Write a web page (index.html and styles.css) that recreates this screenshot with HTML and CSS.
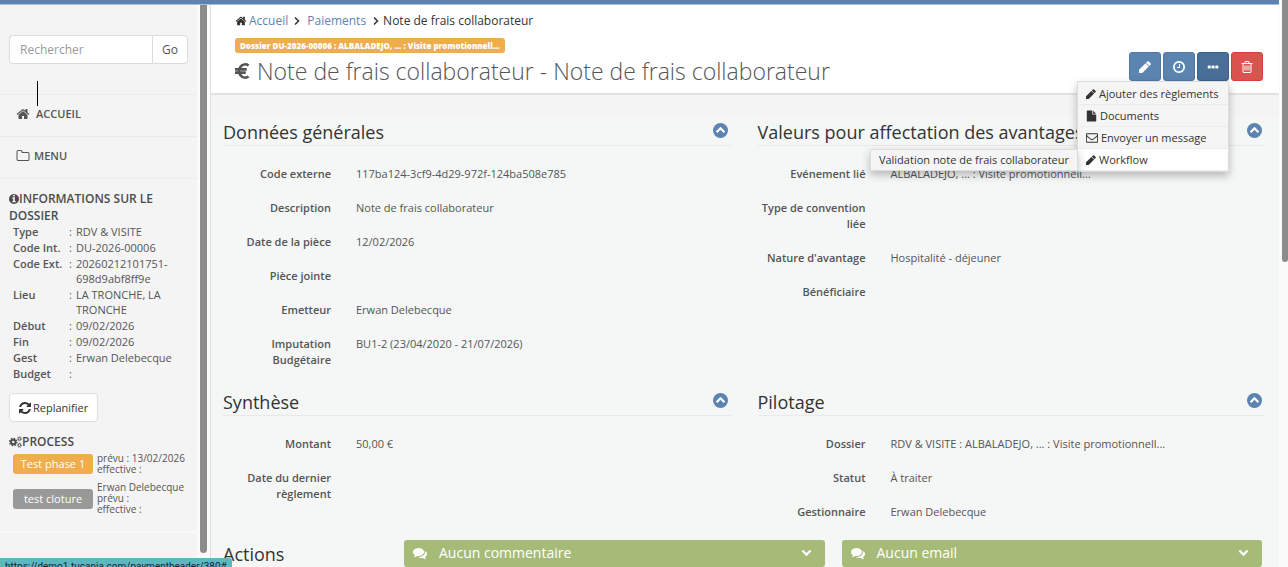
FILE: index.html
```html
<!DOCTYPE html>
<html lang="fr">
<head>
<meta charset="utf-8">
<title>Note de frais collaborateur</title>
<link rel="stylesheet" href="styles.css">
</head>
<body>
<svg class="sprite" aria-hidden="true">
  <symbol id="home" viewBox="0 0 1792 1792"><path d="M1472 992v480q0 26-19 45t-45 19h-384v-384h-256v384h-384q-26 0-45-19t-19-45v-480q0-1 .5-3t.5-3l575-474 575 474q1 2 1 6zm223-69l-62 74q-8 9-21 11h-3q-13 0-21-7l-692-577-692 577q-12 8-24 7-13-2-21-11l-62-74q-8-10-7-23.5t11-21.5l719-599q32-26 76-26t76 26l244 204v-195q0-14 9-23t23-9h192q14 0 23 9t9 23v408l219 182q10 8 11 21.5t-7 23.5z"/></symbol>
  <symbol id="folder" viewBox="0 0 1792 1792"><path d="M1600 1312v-704q0-40-28-68t-68-28h-704q-40 0-68-28t-28-68v-64q0-40-28-68t-68-28h-320q-40 0-68 28t-28 68v960q0 40 28 68t68 28h1216q40 0 68-28t28-68zm128-704v704q0 92-66 158t-158 66h-1216q-92 0-158-66t-66-158v-960q0-92 66-158t158-66h320q92 0 158 66t66 158v32h672q92 0 158 66t66 158z"/></symbol>
  <symbol id="info" viewBox="128 128 1536 1536"><path d="M1152 1376v-160q0-14-9-23t-23-9h-96v-512q0-14-9-23t-23-9h-320q-14 0-23 9t-9 23v160q0 14 9 23t23 9h96v320h-96q-14 0-23 9t-9 23v160q0 14 9 23t23 9h448q14 0 23-9t9-23zm-128-896v-160q0-14-9-23t-23-9h-192q-14 0-23 9t-9 23v160q0 14 9 23t23 9h192q14 0 23-9t9-23zm640 416q0 209-103 385.5t-279.5 279.5-385.5 103-385.5-103-279.5-279.5-103-385.5 103-385.5 279.5-279.5 385.5-103 385.5 103 279.5 279.5 103 385.5z"/></symbol>
  <symbol id="refresh" viewBox="128 128 1536 1536"><path d="M1639 1056q0 5-1 7-64 268-268 434.5t-478 166.5q-146 0-282.5-55t-243.5-157l-129 129q-19 19-45 19t-45-19-19-45v-448q0-26 19-45t45-19h448q26 0 45 19t19 45-19 45l-137 137q71 66 161 102t187 36q134 0 250-65t186-179q11-17 53-117 8-23 30-23h192q13 0 22.5 9.5t9.5 22.5zm25-800v448q0 26-19 45t-45 19h-448q-26 0-45-19t-19-45 19-45l138-138q-148-137-349-137-134 0-250 65t-186 179q-11 17-53 117-8 23-30 23h-199q-13 0-22.5-9.5t-9.5-22.5v-7q65-268 270-434.5t480-166.5q146 0 284 55.5t245 156.5l130-129q19-19 45-19t45 19 19 45z"/></symbol>
  <symbol id="cogs" viewBox="0 0 26 24"><g fill="none" stroke="currentColor"><circle cx="8.500" cy="12" r="4.500" stroke-width="4"/><circle cx="8.500" cy="12" r="7.500" stroke-width="2.500" stroke-dasharray="3 2.890"/><circle cx="21" cy="5.500" r="2.600" stroke-width="2"/><circle cx="21" cy="5.500" r="4.300" stroke-width="1.500" stroke-dasharray="1.700 1.677"/><circle cx="21" cy="18.500" r="2.600" stroke-width="2"/><circle cx="21" cy="18.500" r="4.300" stroke-width="1.500" stroke-dasharray="1.700 1.677"/></g></symbol>
  <symbol id="euro" viewBox="0 0 16 18"><path d="M14.500 3.200A6.500 7 0 1 0 14.500 14.800M0 7.300H12.500M0 10.700H11.500" fill="none" stroke="currentColor" stroke-width="2.800"/></symbol>
  <symbol id="pencil" viewBox="128 128 1536 1536"><path d="M491 1536l91-91-235-235-91 91v107h128v128h107zm523-928q0-22-22-22-10 0-17 7l-542 542q-7 7-7 17 0 22 22 22 10 0 17-7l542-542q7-7 7-17zm-54-192l416 416-832 832h-416v-416zm683 96q0 53-37 90l-166 166-416-416 166-165q36-38 90-38 53 0 91 38l235 234q37 39 37 91z"/></symbol>
  <symbol id="pencil-solid" viewBox="128 128 1536 1536"><path d="M960 416l416 416-832 832h-416v-416zm683 96q0 53-37 90l-166 166-416-416 166-165q36-38 90-38 53 0 91 38l235 234q37 39 37 91z"/></symbol>
  <symbol id="clock" viewBox="128 128 1536 1536"><path d="M1024 544v448q0 14-9 23t-23 9h-320q-14 0-23-9t-9-23v-64q0-14 9-23t23-9h224v-352q0-14 9-23t23-9h64q14 0 23 9t9 23zm416 352q0-148-73-273t-198-198-273-73-273 73-198 198-73 273 73 273 198 198 273 73 273-73 198-198 73-273zm224 0q0 209-103 385.5t-279.5 279.5-385.5 103-385.5-103-279.5-279.5-103-385.5 103-385.5 279.5-279.5 385.5-103 385.5 103 279.5 279.5 103 385.5z"/></symbol>
  <symbol id="dots" viewBox="0 0 12 12"><path d="M1.500 4.500h1.500a.8.8 0 0 1 .8.800v1.400a.8.8 0 0 1-.8.800h-1.500a.8.8 0 0 1-.8-.8v-1.400a.8.8 0 0 1 .8-.8zm3.800 0h1.500a.8.8 0 0 1 .8.800v1.400a.8.8 0 0 1-.8.800h-1.500a.8.8 0 0 1-.8-.8v-1.400a.8.8 0 0 1 .8-.8zm3.800 0h1.500a.8.8 0 0 1 .8.800v1.400a.8.8 0 0 1-.8.800h-1.500a.8.8 0 0 1-.8-.8v-1.400a.8.8 0 0 1 .8-.8z"/></symbol>
  <symbol id="trash" viewBox="128 128 1536 1536"><path d="M704 736v576q0 14-9 23t-23 9h-64q-14 0-23-9t-9-23v-576q0-14 9-23t23-9h64q14 0 23 9t9 23zm256 0v576q0 14-9 23t-23 9h-64q-14 0-23-9t-9-23v-576q0-14 9-23t23-9h64q14 0 23 9t9 23zm256 0v576q0 14-9 23t-23 9h-64q-14 0-23-9t-9-23v-576q0-14 9-23t23-9h64q14 0 23 9t9 23zm128 724v-948h-896v948q0 22 7 40.5t14.5 27 10.5 8.5h832q3 0 10.5-8.5t14.5-27 7-40.5zm-672-1076h448l-48-117q-7-9-17-11h-317q-10 2-17 11zm928 32v64q0 14-9 23t-23 9h-96v948q0 83-47 143.5t-113 60.5h-832q-66 0-113-58.5t-47-141.5v-952h-96q-14 0-23-9t-9-23v-64q0-14 9-23t23-9h309l70-167q15-37 54-63t79-26h320q40 0 79 26t54 63l70 167h309q14 0 23 9t9 23z"/></symbol>
  <symbol id="file" viewBox="0 0 1792 1792"><path d="M1152 512v-472q22 14 36 28l408 408q14 14 28 36h-472zm-128 32q0 40 28 68t68 28h544v1056q0 40-28 68t-68 28h-1344q-40 0-68-28t-28-68v-1600q0-40 28-68t68-28h800v544z"/></symbol>
  <symbol id="mail" viewBox="0 64 1792 1792"><path d="M1664 1504v-768q-32 36-69 66-268 206-426 338-51 43-83 67t-86.5 48.5-102.5 24.5h-2q-48 0-102.5-24.5t-86.5-48.5-83-67q-158-132-426-338-37-30-69-66v768q0 13 9.5 22.5t22.5 9.5h1472q13 0 22.5-9.5t9.5-22.5zm0-1051v-24.5l-.5-13-3-12.5-5.500-9-9-7.500-14-2.500h-1472q-13 0-22.500 9.500t-9.500 22.500q0 168 147 284 193 152 401 317 6 5 35 29.500t46 37.500 44.500 31.500 50.500 27.500 43 9h2q20 0 43-9t50.500-27.500 44.500-31.500 46-37.500 35-29.500q208-165 401-317 54-43 100.500-115.500t46.500-131.500zm128-37v1088q0 66-47 113t-113 47h-1472q-66 0-113-47t-47-113v-1088q0-66 47-113t113-47h1472q66 0 113 47t47 113z"/></symbol>
  <symbol id="comments" viewBox="0 0 1792 1792"><path d="M1408 768q0 139-94 257t-256.5 186.500-353.500 68.500q-86 0-176-16-124 88-278 128-36 9-86 16h-3q-11 0-20.500-8t-11.500-21q-1-3-1-6.500t.5-6.500 2-6l2.500-5 3.500-5.500 4-5 4.500-5 4-4.500q5-6 23-25t26-29.500 22.500-29 25-38.500 20.500-44q-124-72-195-177t-71-224q0-139 94-257t256.500-186.500 353.500-68.500 353.500 68.500 256.500 186.500 94 257zm384 256q0 120-71 224.500t-195 176.500q10 24 20.500 44t25 38.500 22.500 29 26 29.500 23 25q1 1 4 4.500t4.500 5 4 5 3.500 5.500l2.500 5 2 6 .5 6.500-1 6.500q-3 14-13 22t-22 7q-50-7-86-16-154-40-278-128-90 16-176 16-271 0-472-132 58 4 88 4 161 0 309-45t264-129q125-92 192-212t67-254q0-77-23-152 129 71 204 178t75 230z"/></symbol>
  <symbol id="up" viewBox="0 0 16 16"><circle cx="8" cy="8" r="8"/><path d="M3.800 9.800L8 5.600l4.200 4.200" fill="none" stroke="#fff" stroke-width="2.400"/></symbol>
  <symbol id="down" viewBox="0 0 12 12"><path d="M1.500 3.800L6 8.300l4.500-4.500" fill="none" stroke="currentColor" stroke-width="2.400"/></symbol>
  <symbol id="right" viewBox="0 0 12 12"><path d="M4 2.500L7.500 6 4 9.500" fill="none" stroke="currentColor" stroke-width="1.500"/></symbol>
</svg>
<div class="app">
<div class="topbar"></div>
<div class="shell">
  <aside class="sidebar">
    <div class="side-content">
      <form class="search">
        <input class="search-box" type="text" placeholder="Rechercher" aria-label="Rechercher">
        <button class="search-go" type="button">Go</button>
        <span class="caret"></span>
      </form>
      <nav class="side-nav">
        <a class="side-link home-link" href="#"><svg class="ico"><use href="#home"/></svg>ACCUEIL</a>
        <a class="side-link menu-link" href="#"><svg class="ico"><use href="#folder"/></svg>MENU</a>
      </nav>
      <section class="side-block">
        <h2 class="side-title"><svg class="ico-title"><use href="#info"/></svg>INFORMATIONS SUR LE DOSSIER</h2>
        <table class="info">
          <tr><th>Type</th><td>:</td><td>RDV &amp; VISITE</td></tr>
          <tr><th>Code Int.</th><td>:</td><td>DU-2026-00006</td></tr>
          <tr><th>Code Ext.</th><td>:</td><td>20260212101751-698d9abf8ff9e</td></tr>
          <tr><th>Lieu</th><td>:</td><td>LA TRONCHE, LA TRONCHE</td></tr>
          <tr><th>Début</th><td>:</td><td>09/02/2026</td></tr>
          <tr><th>Fin</th><td>:</td><td>09/02/2026</td></tr>
          <tr><th>Gest</th><td>:</td><td>Erwan Delebecque</td></tr>
          <tr><th>Budget</th><td>:</td><td></td></tr>
        </table>
        <button class="replan" type="button"><svg class="ico-small"><use href="#refresh"/></svg>Replanifier</button>
        <h2 class="side-title"><svg class="ico-cogs"><use href="#cogs"/></svg>PROCESS</h2>
        <div class="process">
          <button class="phase phase-active" type="button">Test phase 1</button>
          <p class="phase-text">prévu : 13/02/2026<br>effective :</p>
        </div>
        <div class="process">
          <button class="phase" type="button">test cloture</button>
          <p class="phase-text">Erwan Delebecque<br>prévu :<br>effective :</p>
        </div>
      </section>
    </div>
    <div class="side-scroll"></div>
  </aside>
  <main class="main">
    <header class="head">
      <div class="head-text">
        <nav class="crumbs">
          <svg class="ico-small"><use href="#home"/></svg><a class="crumb-first" href="#">Accueil</a>
          <svg class="sep"><use href="#right"/></svg><a class="crumb-mid" href="#">Paiements</a>
          <svg class="sep"><use href="#right"/></svg><span>Note de frais collaborateur</span>
        </nav>
        <span class="tag">Dossier DU-2026-00006 : ALBALADEJO, ... : Visite promotionnell...</span>
        <h1 class="title"><svg class="ico-euro"><use href="#euro"/></svg>Note de frais collaborateur - Note de frais collaborateur</h1>
      </div>
      <div class="actions">
        <button class="btn" type="button" aria-label="Modifier"><svg class="ico-small"><use href="#pencil-solid"/></svg></button>
        <button class="btn" type="button" aria-label="Historique"><svg class="ico-small"><use href="#clock"/></svg></button>
        <button class="btn btn-open" type="button" aria-label="Plus"><svg class="ico-small"><use href="#dots"/></svg></button>
        <button class="btn btn-danger" type="button" aria-label="Supprimer"><svg class="ico-small"><use href="#trash"/></svg></button>
        <div class="menu">
          <a class="menu-item" href="#"><svg class="ico-menu"><use href="#pencil-solid"/></svg>Ajouter des règlements</a>
          <a class="menu-item" href="#"><svg class="ico-menu ico-full"><use href="#file"/></svg>Documents</a>
          <a class="menu-item" href="#"><svg class="ico-menu ico-wide"><use href="#mail"/></svg>Envoyer un message</a>
          <a class="menu-item menu-current" href="#"><svg class="ico-menu"><use href="#pencil-solid"/></svg>Workflow</a>
          <a class="submenu" href="#">Validation note de frais collaborateur</a>
        </div>
      </div>
    </header>
    <div class="panels">
      <section class="panel">
        <h2 class="panel-title">Données générales<button class="fold" type="button" aria-label="Replier"><svg class="ico-fold"><use href="#up"/></svg></button></h2>
        <dl class="fields">
          <dt>Code externe</dt><dd>117ba124-3cf9-4d29-972f-124ba508e785</dd>
          <dt>Description</dt><dd>Note de frais collaborateur</dd>
          <dt>Date de la pièce</dt><dd>12/02/2026</dd>
          <dt>Pièce jointe</dt><dd></dd>
          <dt>Emetteur</dt><dd>Erwan Delebecque</dd>
          <dt>Imputation Budgétaire</dt><dd>BU1-2 (23/04/2020 - 21/07/2026)</dd>
        </dl>
      </section>
      <section class="panel">
        <h2 class="panel-title">Valeurs pour affectation des avantages<button class="fold" type="button" aria-label="Replier"><svg class="ico-fold"><use href="#up"/></svg></button></h2>
        <dl class="fields">
          <dt>Evénement lié</dt><dd>ALBALADEJO, ... : Visite promotionnell...</dd>
          <dt>Type de convention liée</dt><dd></dd>
          <dt>Nature d'avantage</dt><dd>Hospitalité - déjeuner</dd>
          <dt>Bénéficiaire</dt><dd></dd>
        </dl>
      </section>
      <section class="panel">
        <h2 class="panel-title">Synthèse<button class="fold" type="button" aria-label="Replier"><svg class="ico-fold"><use href="#up"/></svg></button></h2>
        <dl class="fields">
          <dt>Montant</dt><dd>50,00 €</dd>
          <dt>Date du dernier règlement</dt><dd></dd>
        </dl>
      </section>
      <section class="panel">
        <h2 class="panel-title">Pilotage<button class="fold" type="button" aria-label="Replier"><svg class="ico-fold"><use href="#up"/></svg></button></h2>
        <dl class="fields">
          <dt>Dossier</dt><dd>RDV &amp; VISITE : ALBALADEJO, ... : Visite promotionnell...</dd>
          <dt>Statut</dt><dd>À traiter</dd>
          <dt>Gestionnaire</dt><dd>Erwan Delebecque</dd>
        </dl>
      </section>
    </div>
    <section class="bottom">
      <h2 class="bottom-title">Actions</h2>
      <button class="bar" type="button"><svg class="ico-bar"><use href="#comments"/></svg><span>Aucun commentaire</span><svg class="ico-down"><use href="#down"/></svg></button>
      <button class="bar" type="button"><svg class="ico-bar"><use href="#comments"/></svg><span>Aucun email</span><svg class="ico-down"><use href="#down"/></svg></button>
    </section>
  </main>
</div>
</div>
<div class="page-scroll"><div class="page-thumb"></div></div>
<div class="status">https://demo1.tucania.com/paymentheader/380#</div>
</body>
</html>
```
FILE: styles.css
```css
* { box-sizing: border-box; }
body {
  margin: 0;
  height: 100vh;
  overflow: hidden;
  display: flex;
  background: #f4f4f4;
  color: #555;
  font: 11px/16px "Open Sans", "Noto Sans", sans-serif;
}
h1, h2, p, dl, dd { margin: 0; }
a { color: #5b84b1; text-decoration: none; }
button, input { font: inherit; color: inherit; margin: 0; }
svg { fill: currentColor; flex: none; }
.sprite { position: absolute; width: 0; height: 0; }
.ico { width: 14px; height: 14px; }
.ico-small { width: 12px; height: 12px; }
.app { flex: 1; min-width: 0; display: flex; flex-direction: column; }
.topbar { height: 5px; flex: none; background: #5b84b1; border-bottom: 1px solid #a9bfd6; }
.shell { flex: 1; min-height: 0; display: flex; }

.sidebar { width: 210px; flex: none; display: flex; background: #fbfbfb; }
.side-content { flex: 1; background: #f4f4f4; overflow: hidden; }
.side-scroll { width: 7px; height: 548px; margin: 0 3px; background: #8c8c8c; border-radius: 0 0 4px 4px; }
.search { position: relative; display: flex; padding: 30px 9px; border-bottom: 1px solid #ebebeb; }
.search-box {
  flex: 1; min-width: 0; height: 29px; padding: 0 10px;
  font-size: 12px; background: #fff;
  border: 1px solid #dcdcdc; border-right: 0; border-radius: 4px 0 0 4px;
}
.search-box::placeholder { color: #999; opacity: 1; }
.search-go { width: 36px; height: 29px; padding: 0; font-size: 12px; background: #fff; border: 1px solid #dcdcdc; border-radius: 0 4px 4px 0; }
.caret { position: absolute; left: 37px; top: 76px; width: 1px; height: 25px; background: #000; }
.side-link {
  display: flex; align-items: center; height: 42px; padding: 0 16px 4px;
  color: #555; font-weight: 600; border-bottom: 1px solid #ebebeb;
}
.home-link { gap: 6px; }
.menu-link { gap: 4px; }
.side-block { padding: 11px 9px 9px; border-bottom: 2px solid #f9f9f9; }
.side-title { font-size: 12px; line-height: 17px; font-weight: 600; color: #4c4c4c; }
.ico-title { width: 10px; height: 10px; vertical-align: -1px; }
.ico-cogs { width: 13px; height: 12px; vertical-align: -2px; }
.info { width: 100%; border-collapse: collapse; margin-bottom: 11px; }
.info th, .info td { padding: 0 0 1px; vertical-align: top; text-align: left; line-height: 15px; }
.info th { width: 60px; padding-left: 4px; font-weight: 600; }
.info td:nth-child(2) { width: 7px; }
.info td:last-child { overflow-wrap: anywhere; padding-right: 16px; }
.replan {
  display: flex; align-items: center; gap: 2px; height: 29px; padding: 0 9px; margin-bottom: 11px;
  font-size: 11px; color: #333; background: #fff; border: 1px solid #dedede; border-radius: 4px;
}
.process { display: flex; align-items: center; gap: 4px; padding-left: 4px; margin: 3px 0 7px; line-height: 11px; }
.phase { width: 80px; height: 20px; padding: 0; border: 0; border-radius: 3px; background: #999; color: #fff; font-size: 11px; line-height: 20px; }
.phase-active { background: #f0ad4e; }
.phase-text { font-size: 10px; white-space: nowrap; }

.main { flex: 1; min-width: 0; display: flex; flex-direction: column; border-left: 1px solid #dcdfe0; background: #f4f7f6; }
.head {
  position: relative; display: flex; justify-content: space-between; align-items: flex-end;
  padding: 8px 16px 7px 24px; background: #fff; border-bottom: 2px solid #e2e2e2;
}
.head-text { min-width: 0; white-space: nowrap; }
.crumbs { display: flex; align-items: center; font-size: 12px; color: #333; }
.crumb-first { margin: 0 2px; }
.crumb-mid { margin: 0 3px; }
.sep { width: 14px; height: 12px; }
.tag {
  display: block; width: fit-content; margin-top: 9px; padding: 0 5px; border-radius: 3px;
  background: #f0ad4e; color: #fff; font-size: 8px; line-height: 15px; font-weight: 800;
}
.title { font-size: 23px; line-height: 30px; font-weight: 300; margin-top: 3px; }
.ico-euro { width: 15px; height: 18px; margin-right: 7px; }
.actions { position: relative; display: flex; gap: 2px; margin-bottom: 5px; }
.btn { display: flex; align-items: center; justify-content: center; width: 32px; height: 29px; padding: 0; border: 1px solid #5079a5; border-radius: 3px; background: #5b84b1; color: #fff; }
.btn-open { background: #476f97; border-color: #3d6186; }
.btn-danger { background: #d9534f; border-color: #d43f3a; }
.menu { position: absolute; z-index: 2; top: 29px; right: 34px; width: 152px; padding-top: 1px; background: #f5f5f5; border: 1px solid #dcdce2; box-shadow: 0 4px 8px rgba(0, 0, 0, .25); }
.menu-item { display: flex; align-items: center; gap: 3px; height: 22px; padding-left: 8px; color: #333; font-size: 11px; border-bottom: 1px solid #ececec; white-space: nowrap; }
.menu-current { background: #fff; }
.ico-menu { width: 10px; height: 10px; }
.ico-full { width: 11px; height: 12px; }
.ico-wide { width: 12px; height: 12px; }
.submenu { position: absolute; right: 100%; bottom: 0; height: 22px; padding: 0 8px; color: #333; font-size: 11px; line-height: 20px; white-space: nowrap; background: #f5f5f5; border: 1px solid #dcdce2; box-shadow: 0 4px 8px rgba(0, 0, 0, .25); }

.panels { display: grid; grid-template-columns: 1fr 1fr; column-gap: 27px; padding: 0 14px 0 12px; border-top: 23px solid #f4f4f4; }
.panel-title {
  display: flex; justify-content: space-between; height: 28px; padding-right: 3px;
  font-size: 18px; line-height: 28px; font-weight: 400; color: #333; border-bottom: 1px solid #e8eaea; white-space: nowrap;
}
.fold { display: flex; align-items: center; padding: 0 0 2px; border: 0; background: none; color: #5b84b1; }
.ico-fold { width: 15px; height: 15px; }
.fields { display: grid; grid-template-columns: 108px 1fr; column-gap: 25px; row-gap: 18px; padding: 20px 0; }
.fields dt { text-align: right; font-weight: 600; }
.bottom { display: grid; grid-template-columns: 164px 1fr 1fr; column-gap: 17px; align-items: start; padding: 0 17px 0 12px; }
.bottom-title { font-size: 18px; line-height: 28px; font-weight: 400; color: #333; }
.bar { display: flex; align-items: center; gap: 12px; height: 27px; padding: 0 13px 2px 9px; border: 0; border-radius: 3px; background: #a7bb79; color: #fff; font-size: 14px; }
.ico-bar { width: 14px; height: 14px; }
.ico-down { width: 11px; height: 11px; margin-left: auto; }
.page-scroll { width: 9px; flex: none; padding-left: 3px; background: #fbfbfb; }
.page-thumb { height: 262px; background: #8c8c8c; border-radius: 0 0 3px 3px; }
.status { position: fixed; left: 0; bottom: 0; height: 9px; padding: 0 5px; overflow: hidden; background: #5bb8c0; color: #223; font: 10px/17px Roboto, sans-serif; border-radius: 0 3px 0 0; }
```
